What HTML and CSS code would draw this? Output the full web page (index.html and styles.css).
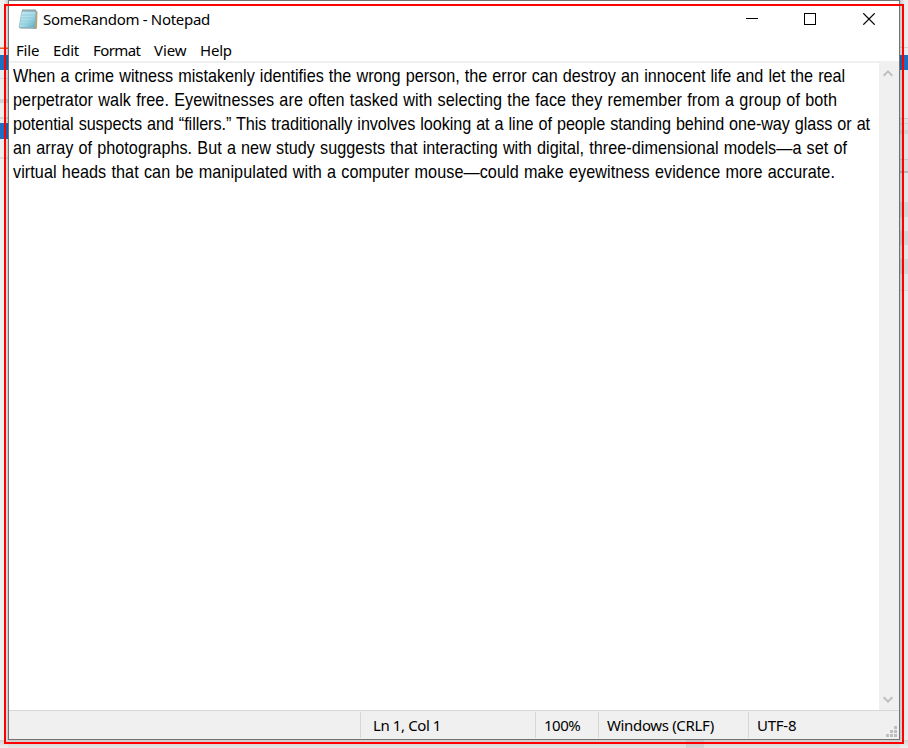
FILE: index.html
```html
<!DOCTYPE html>
<html lang="en">
<head>
<meta charset="utf-8">
<title>SomeRandom - Notepad</title>
<link rel="stylesheet" href="styles.css">
</head>
<body>
<div class="desktop">
  <div class="behind behind-left"></div>
  <main class="window">
    <header class="titlebar">
      <svg class="app-icon" width="21" height="22" viewBox="0 0 21 22">
        <defs>
          <linearGradient id="pad" x1="0" y1="0" x2="1" y2="1">
            <stop offset="0" stop-color="#c9edf4"/>
            <stop offset=".55" stop-color="#a5dbe8"/>
            <stop offset="1" stop-color="#54a9bf"/>
          </linearGradient>
        </defs>
        <path d="M17 2.500L19.500 3.500L19 20.500L15.500 20.500Z" fill="#b9a57c"/>
        <path d="M2 19L17.500 19.500L18.500 20.800L2 20.500Z" fill="#8b9a98"/>
        <path d="M4 2.500H18L16.500 19.500H1Z" fill="url(#pad)" stroke="#78aebb" stroke-width=".6"/>
        <path d="M3.700 7H16.700M3.200 10H16.400M2.700 13H16.100M2.200 16H15.800" stroke="#86c3d2" stroke-width=".7"/>
        <path d="M5 1V4M7 1V4M9 1V4M11 1V4M13 1V4M15 1V4M17 1V4" stroke="#77898c" stroke-width=".9"/>
      </svg>
      <h1 class="title">SomeRandom - Notepad</h1>
      <svg class="controls" width="130" height="12" viewBox="0 0 130 12" fill="none" stroke="#000">
        <path d="M0 5.500H12"/>
        <rect x="58.500" y=".5" width="11" height="11"/>
        <path d="M117.300 .3L128.700 11.700M128.700 .3L117.300 11.700" stroke-width="1.200"/>
      </svg>
    </header>
    <nav class="menu">
      <span class="file">File</span><span class="edit">Edit</span><span class="format">Format</span><span class="view">View</span><span class="help">Help</span>
    </nav>
    <section class="editor">
      <div class="text">
        <div class="line l1">When a crime witness mistakenly identifies the wrong person, the error can destroy an innocent life and let the real</div>
        <div class="line l2">perpetrator walk free. Eyewitnesses are often tasked with selecting the face they remember from a group of both</div>
        <div class="line l3">potential suspects and “fillers.” This traditionally involves looking at a line of people standing behind one-way glass or at</div>
        <div class="line l4">an array of photographs. But a new study suggests that interacting with digital, three-dimensional models—a set of</div>
        <div class="line l5">virtual heads that can be manipulated with a computer mouse—could make eyewitness evidence more accurate.</div>
      </div>
      <div class="scrollbar">
        <svg width="10" height="7" viewBox="0 0 10 7"><path d="M.7 5.700L5 1.400L9.300 5.700" fill="none" stroke="#bfbfbf" stroke-width="2"/></svg>
        <svg width="10" height="7" viewBox="0 0 10 7"><path d="M.7 1.300L5 5.600L9.300 1.300" fill="none" stroke="#bfbfbf" stroke-width="2"/></svg>
      </div>
    </section>
    <footer class="status">
      <span class="cell"></span>
      <span class="cell position">Ln 1, Col 1</span>
      <span class="cell zoom">100%</span>
      <span class="cell ending">Windows (CRLF)</span>
      <span class="cell encoding">UTF-8</span>
      <svg class="grip" width="11" height="11" viewBox="0 0 11 11" fill="#bfbfbf"><path d="M8 0h3v3h-3zM4 4h3v3h-3zM8 4h3v3h-3zM0 8h3v3h-3zM4 8h3v3h-3zM8 8h3v3h-3z"/></svg>
    </footer>
  </main>
  <div class="behind behind-right"></div>
  <div class="behind behind-bottom"></div>
  <div class="highlight"></div>
</div>
</body>
</html>
```

FILE: styles.css
```css
* { box-sizing: border-box; }
body { margin: 0; }
.desktop {
  position: relative;
  display: grid;
  grid-template: 740px 8px / 8px 892px 8px;
  width: 908px;
  height: 748px;
  overflow: hidden;
  background: #e9e9e9;
}
.behind-left {
  background:
    linear-gradient(90deg, transparent 50%, rgba(0,0,0,.17)),
    linear-gradient(#f0f0f0 0 47px, #f4a07c 47px 48px, #f5562d 48px 49px, #e8e8e8 49px 55px, #1c6fc1 55px 70px, #ececec 70px 78px, #d8d8d8 78px 79px, #ededed 79px 99px, #d2d2d2 99px 103px, #ededed 103px 117px, #d5d5d5 117px 119px, #e9e9e9 119px 123px, #1c6fc1 123px 139px, #eee 139px 157px, #dcdcdc 157px 159px, #f0f0f0 159px);
}
.behind-right {
  background:
    linear-gradient(90deg, rgba(0,0,0,.17), transparent 60%),
    linear-gradient(#eee 0 47px, #d2d2d2 47px 48px, #eee 48px 55px, #1c6fc1 55px 70px, #e9e9e9 70px 118px, #c8c8c8 118px 119px, #e3e3e3 119px 123px, #d0d0d0 123px 124px, #e2e2e2 124px 130px, #d4d4d4 130px 134px, #e4e4e4 134px 159px, #c9c9c9 159px 160px, #ddd 160px 171px, #b8b8b8 171px 173px, #e7e7e7 173px 202px, #d7d7d7 202px 217px, #e7e7e7 217px 231px, #d7d7d7 231px 245px, #e7e7e7 245px 259px, #d7d7d7 259px 274px, #e7e7e7 274px 290px, #dadada 290px 291px, #ececec 291px);
}
.behind-bottom {
  grid-column: 1 / -1;
  background:
    linear-gradient(rgba(0,0,0,.12), transparent),
    linear-gradient(90deg, #f0f0f0 0 8px, #e8e8e6 8px 686px, #d9d9d9 686px 704px, #e8e8e6 704px 900px, #f0f0f0 900px);
}
.highlight {
  position: absolute;
  inset: 4px;
  border: 2px solid #f00;
}
.window {
  display: flex;
  flex-direction: column;
  border: 1px solid #737373;
  background: #fff;
  font: 15px/20px "Noto Sans", "Open Sans", sans-serif;
  color: #000;
}
.titlebar {
  display: flex;
  align-items: flex-start;
  height: 39px;
  padding: 7px 23px 0 9px;
}
.title {
  margin: 1px 0 0 4px;
  font-size: 15px;
  font-weight: 400;
  letter-spacing: -.3px;
  white-space: nowrap;
}
.controls { margin: 5px 0 0 auto; }
.menu {
  display: flex;
  gap: 14px;
  height: 23px;
  padding-left: 7px;
  border-bottom: 2px solid #f0f0f0;
}
.file { width: 23px; letter-spacing: -.2px; }
.edit { width: 26px; letter-spacing: -.2px; }
.format { width: 47px; letter-spacing: -.6px; }
.view { width: 32px; letter-spacing: -.1px; }
.help { letter-spacing: -.2px; }
.editor {
  display: flex;
  flex: 1;
  min-height: 0;
}
.text {
  flex: 1;
  min-width: 0;
  padding: 1px 0 0 4px;
  font: 18.5px/24px "Liberation Sans", Arial, sans-serif;
  word-spacing: .7px;
}
.line {
  width: 990px;
  white-space: nowrap;
  transform: scaleX(.875);
  transform-origin: 0 0;
}
.l1 { letter-spacing: 0; }
.l2 { letter-spacing: .095px; }
.l3 { letter-spacing: -.078px; }
.l4 { letter-spacing: .045px; }
.l5 { letter-spacing: .078px; }
.scrollbar {
  display: flex;
  flex: none;
  flex-direction: column;
  justify-content: space-between;
  width: 20px;
  padding: 7px 6px 7px 4px;
  background: #f0f0f0;
}
.status {
  display: grid;
  grid-template-columns: 351px 175px 63px 150px 1fr 13px;
  height: 29px;
  padding: 1px 0;
  border-top: 1px solid #d7d7d7;
  background: #f0f0f0;
}
.cell {
  padding: 3px 0 0 8px;
  border-left: 1px solid #d7d7d7;
  letter-spacing: -.4px;
  white-space: nowrap;
}
.cell:first-child { border: 0; }
.position { padding-left: 12px; }
.zoom { letter-spacing: -.5px; }
.ending { letter-spacing: -.35px; }
.encoding { letter-spacing: -.25px; }
.grip { align-self: end; margin-bottom: 1px; }
```
